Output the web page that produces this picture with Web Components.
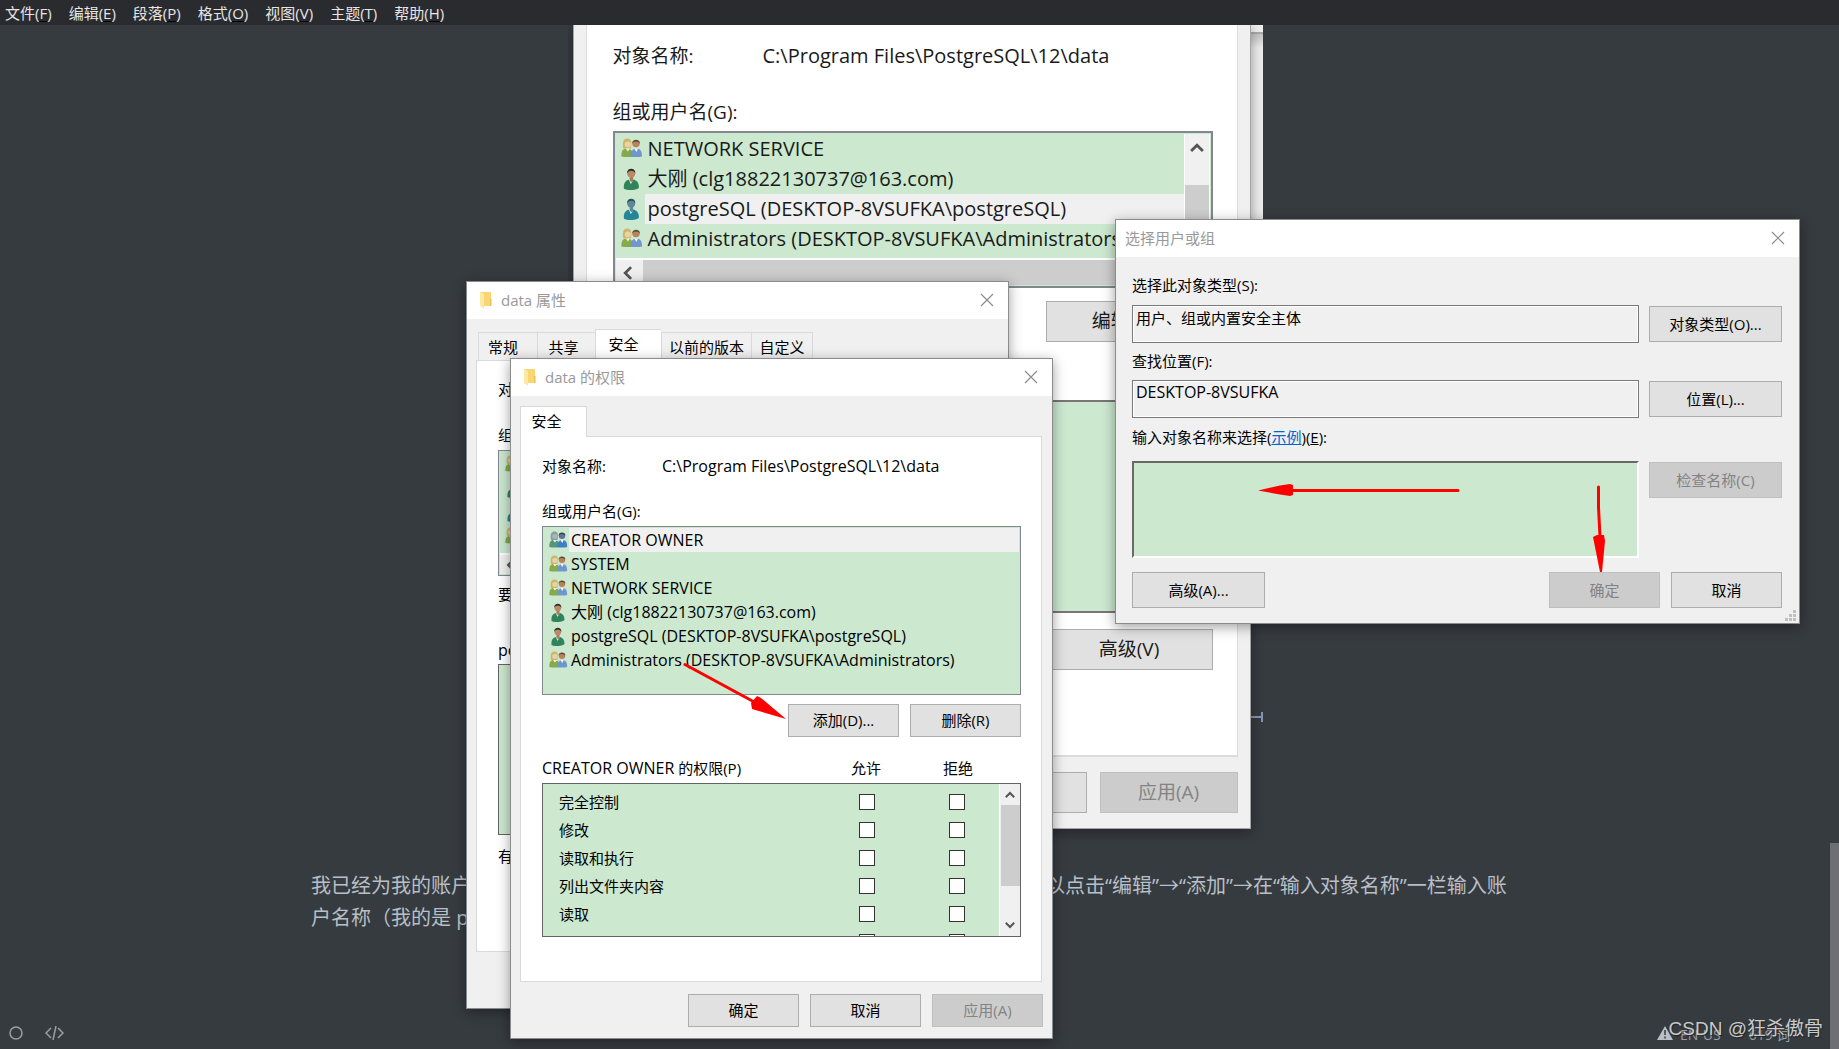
<!DOCTYPE html>
<html lang="zh-CN">
<head>
<meta charset="utf-8">
<title>Typora</title>
<style>
  html, body { height: 100%; margin: 0; }
  body {
    display: flex; flex-direction: column; overflow: hidden; position: relative;
    background: #363b40; color: #000;
    font: 15px/20px "Open Sans", "Noto Sans CJK SC", sans-serif;
  }
  doc-view { flex: 1; min-height: 0; }
  os-window { position: absolute; }
  #props { left: 466px; top: 281px; width: 541px; height: 726px; z-index: 2; }
  #perms { left: 510px; top: 358px; width: 541px; height: 679px; z-index: 3; }
  #picker { left: 1115px; top: 219px; width: 683px; height: 403px; z-index: 4; }
  status-bar { position: absolute; left: 0; right: 0; bottom: 0; z-index: 1; }
  ink-arrows { position: absolute; left: 0; top: 0; z-index: 5; }
</style>
</head>
<body>
<menu-bar></menu-bar>
<doc-view></doc-view>
<os-window id="props" caption="data 属性" icon="folder"><props-pane></props-pane></os-window>
<os-window id="perms" caption="data 的权限" icon="folder"><perms-pane></perms-pane></os-window>
<os-window id="picker" caption="选择用户或组"><picker-pane></picker-pane></os-window>
<ink-arrows></ink-arrows>
<status-bar></status-bar>

<script>
const base = `<style>
  *, *::before, *::after { box-sizing: border-box; }
  :host { display: block; }
  button, input { font: inherit; color: inherit; margin: 0; border-radius: 0; }
</style>`;

function element(name, render) {
  customElements.define(name, class extends HTMLElement {
    constructor() { super(); this.attachShadow({ mode: 'open' }); }
    connectedCallback() {
      if (!this.shadowRoot.firstChild) this.shadowRoot.innerHTML = base + render(this);
    }
  });
}

/* ---------- icons ---------- */
const head = (x, y, skin, hair) => `
  <circle cx="${x}" cy="${y}" r="3.4" fill="${skin}"/>
  <path d="M${x - 3.6} ${y}c-.4-5.4 7.6-5.4 7.2 0-1-2.2-2.4-2.2-3.8-2.4-1.4.2-2.6.6-3.4 2.4z" fill="${hair}"/>`;
element('user-icon', el => {
  const kind = el.getAttribute('kind'), sel = el.hasAttribute('selected');
  const pair = `<g transform="translate(.3 .4) scale(.94 .86)">
    <path d="M0 18c0-5 1-8 5-8s6 3 6 8c-3 .8-8 .8-11 0z" fill="${sel ? '#57957b' : '#86a94a'}"/>
    <path d="M1.800 10C.6 3 2.100 0 5.600 0s4.400 4 3 10z" fill="${sel ? '#8d9c9c' : '#cdb766'}"/>
    <circle cx="6" cy="6" r="2.900" fill="${sel ? '#a9b7bd' : '#ecd0a6'}"/>
    <path d="M4 10l2 3 2-3z" fill="#eef3e2"/>
    <path d="M8.500 18c-.2-5 2-8 5.500-8s5 3 5 8c-3 .9-7.500.9-10.500 0z" fill="${sel ? '#3c7fc4' : '#6f97cc'}"/>
    <path d="M12 10l1.800 3.500 1.500-3.500z" fill="#fff"/>
    ${head(13.5, 5.4, sel ? '#64748a' : '#b98355', sel ? '#23405f' : '#5b4a3f')}</g>`;
  const single = `
    <path d="M2.500 18c-.4-5 1-7.500 6-8.500 5 .5 7 3 7 7.500-3 2.600-10 2.600-13 1z" fill="${sel ? '#268596' : '#31835c'}"/>
    <path d="M6.500 9.500l2 4.500 2.500-4.500z" fill="#d9efe4"/>
    <path d="M7.500 7h3v4l-1.500 1-1.500-1z" fill="${sel ? '#5f8794' : '#a87a5c'}"/>
    ${head(8.8, 4.8, sel ? '#5f8794' : '#b98a68', sel ? '#24506c' : '#2d2926')}`;
  return `<style>:host{width:var(--icon,19px);height:var(--icon,19px);flex:none}svg{display:block;width:100%;height:100%}</style>
    <svg viewBox="0 0 19 19" aria-hidden="true">${kind === 'pair' ? pair : single}</svg>`;
});

element('scroll-arrow', el => {
  const turn = { up: 0, right: 90, down: 180, left: 270 }[el.getAttribute('dir')];
  return `<style>:host{width:var(--arrow,10px);height:var(--arrow,10px)}svg{display:block;width:100%;height:100%}</style>
    <svg viewBox="0 0 10 10" aria-hidden="true"><path transform="rotate(${turn} 5 5)" d="M.8 7.200L5 3l4.200 4.200" fill="none" stroke="#555" stroke-width="2"/></svg>`;
});

/* ---------- shared controls ---------- */
element('os-button', el => `<style>
    button { width: 100%; height: 100%; padding: 0 0 1px; border: 1px solid #adadad; background: #e1e1e1; }
    button:disabled { background: #ccc; border-color: #bfbfbf; color: #838383; }
  </style><button type="button" ${el.hasAttribute('off') ? 'disabled' : ''}><slot></slot></button>`);

element('os-window', el => `<style>
    :host { display: flex; flex-direction: column; background: #f0f0f0; border: 1px solid #8a8b8c;
      background-clip: padding-box; box-shadow: 0 3px 12px rgba(0,0,0,.38); box-sizing: content-box; }
    header { display: flex; align-items: center; height: 37px; padding: 0 14px 2px ${el.hasAttribute('icon') ? 12 : 9}px; background: #fff; flex: none; }
    h2 { flex: 1; margin: 0; font: inherit; color: #999; }
    button { border: 0; background: none; padding: 0; width: 14px; height: 14px; }
    svg { display: block; }
    .folder { margin-right: 9px; }
    main { flex: 1; min-height: 0; display: flex; flex-direction: column; }
    ::slotted(*) { flex: 1; min-height: 0; }
  </style>
  <header>
    ${el.hasAttribute('icon') ? `<svg class="folder" width="13" height="18" viewBox="0 0 13 18" aria-hidden="true">
      <path d="M1 1h11v14H1z" fill="#f7d673"/><path d="M1 1l4 2v15l-4-3z" fill="#fde9a4"/><path d="M11 8h1.500v7H11z" fill="#edbf52"/></svg>` : ''}
    <h2>${el.getAttribute('caption')}</h2>
    <button type="button" aria-label="关闭"><svg width="14" height="14" viewBox="0 0 14 14"><path d="M1 1l12 12M13 1L1 13" stroke="#8c8c8c" stroke-width="1.200"/></svg></button>
  </header>
  <main><slot></slot></main>`);

/* List of accounts. Entries: "kind|name", a leading * marks the selected one. */
element('user-list', el => {
  const rows = el.getAttribute('entries').split(';').map(s => {
    const sel = s[0] === '*', [kind, name] = s.replace('*', '').split('|');
    return `<li role="option" aria-selected="${sel}"><user-icon kind="${kind}" ${sel ? 'selected' : ''}></user-icon><span>${name || ''}</span></li>`;
  }).join('');
  const v = el.hasAttribute('vscroll'), h = el.hasAttribute('hscroll');
  return `<style>
    :host { display: flex; flex-direction: column; overflow: hidden; background: #cce8cf;
      border: var(--edge,1px) solid #828790; padding: 1px; height: var(--list-height); }
    .top { display: flex; flex: 1; min-height: 0; }
    ul { flex: 1; min-width: 0; margin: 0; padding: 0 0 0 5px; list-style: none; font-size: var(--list-size,16px); overflow: hidden; }
    li { display: flex; align-items: center; gap: var(--gap,1px); height: var(--row,24px); line-height: var(--row,24px); white-space: nowrap; }
    span { flex: 1; padding-left: var(--indent,2px); }
    li[aria-selected=true] span { background: #f0f0f0; }
    .v { width: 26px; background: #f0f0f0; border: solid #fff; border-width: 0 1px; display: flex; flex-direction: column; align-items: center; padding-top: 7px; }
    .v i { margin-top: 30px; width: 24px; flex: 1; background: #cdcdcd; }
    .h { height: var(--bar,21px); background: #f0f0f0; border-top: 2px solid #fff; display: flex; align-items: center; padding-left: 5px; flex: none; }
    .h i { margin-left: 8px; align-self: stretch; flex: 1; background: #cdcdcd; }
  </style>
  <div class="top"><ul role="listbox" aria-label="组或用户名">${rows}</ul>
  ${v ? '<div class="v"><scroll-arrow dir="up"></scroll-arrow><i></i></div>' : ''}</div>
  ${h ? '<div class="h"><scroll-arrow dir="left"></scroll-arrow><i></i></div>' : ''}`;
});

/* ---------- editor ---------- */
element('menu-bar', () => `<style>
    nav { display: flex; gap: 17px; height: 25px; padding: 0 5px; background: #2a2b2e; color: #e6e6e6; }
    button { border: 0; background: none; padding: 0; line-height: 26px; white-space: nowrap; }
    u { text-underline-offset: 2px; text-decoration-color: #000; }
  </style><nav>${['文件 F', '编辑 E', '段落 P', '格式 O', '视图 V', '主题 T', '帮助 H'].map(t => {
    const [n, k] = t.split(' '); return `<button type="button">${n}(<u>${k}</u>)</button>`; }).join('')}</nav>`);

element('doc-view', () => `<style>
    :host { display: flex; overflow: hidden; }
    article { flex: 1; padding: 0 311px; color: #b8bfc6; font-size: 20px; line-height: 32px; }
    security-shot { margin: 0 auto 25px; }
    p { margin: 0; white-space: nowrap; }
    .gap { display: inline-block; width: 574px; }
    .track { width: 9px; display: flex; flex-direction: column; justify-content: flex-end; }
    .track i { height: 206px; background: #6d6f75; }
  </style>
  <article><security-shot></security-shot>
    <p>我已经为我的账户<span class="gap"></span>以点击“编辑”→“添加”→在“输入对象名称”一栏输入账</p>
    <p>户名称（我的是 p</p>
  </article><div class="track"><i></i></div>`);

/* Enlarged view of the security tab embedded in the article. */
element('security-shot', () => `<style>
    :host { width: 695px; height: 820px; display: flex; padding-left: 5px; color: #1a1a1a; font-size: 19px; line-height: 28px; overflow: hidden; }
    .win { width: 678px; height: 804px; padding: 0 12px; background: #f0f0f0; border: solid #a5a5a5; border-width: 0 1px 1px; box-shadow: 0 3px 12px rgba(0,0,0,.38); display: flex; flex-direction: column; z-index: 1; }
    .page { flex: 1; background: #fff; border: solid #dcdcdc; border-width: 0 1px 2px; padding: 17px 24px 0 26px; }
    .name { display: grid; grid-template-columns: 150px 1fr; margin-bottom: 28px; }
    .path { font-size: 20px; }
    user-list { --edge: 2px; --list-height: 157px; --row: 30px; --list-size: 20px; --icon: 22px; --gap: 2px; --indent: 3px; --bar: 27px; --arrow: 14px; margin-top: 5px; }
    os-button { height: 41px; }
    .side { width: 167px; margin-left: auto; }
    .edit { margin-top: 13px; }
    .head { margin-top: 27px; padding-right: 58px; text-align: right; }
    .box { height: 213px; margin: 3px 0 16px; background: #cce8cf; border: 2px solid #777; }
    footer { display: flex; justify-content: flex-end; gap: 13px; padding: 15px 0; }
    footer os-button { width: 138px; }
    .behind { width: 12px; display: flex; flex-direction: column; }
    .behind b { height: 9px; background: #f0f0f0; border-bottom: 2px solid #aaa; }
    .behind i { height: 400px; background: linear-gradient(#c4c4c4, #eee 14px); }
    svg { margin-top: 275px; display: block; }
  </style>
  <div class="win"><div class="page">
    <div class="name"><span>对象名称:</span><span class="path">C:\\Program Files\\PostgreSQL\\12\\data</span></div>
    <div>组或用户名(G):</div>
    <user-list vscroll hscroll entries="pair|NETWORK SERVICE;single|大刚 (clg18822130737@163.com);*single|postgreSQL (DESKTOP-8VSUFKA\\postgreSQL);pair|Administrators (DESKTOP-8VSUFKA\\Administrators)"></user-list>
    <os-button class="side edit">编辑(E)...</os-button>
    <div class="head">拒绝</div>
    <div class="box"></div>
    <os-button class="side">高级(V)</os-button>
  </div><footer><os-button>取消</os-button><os-button off>应用(A)</os-button></footer></div>
  <div class="behind"><b></b><i></i><svg width="12" height="16" viewBox="0 0 12 16" aria-hidden="true"><path d="M0 8h11M11 3v10" stroke="#8595b5" stroke-width="2" fill="none"/></svg></div>`);

element('status-bar', () => `<style>
    :host { display: flex; align-items: center; height: 32px; padding: 0 16px 0 9px; color: #9a9fa4; }
    svg { display: block; }
    button { border: 0; background: none; padding: 0; margin-right: 22px; }
    .right { margin-left: auto; display: flex; align-items: center; position: relative; width: 166px; height: 32px; font-size: 14px; }
    .right span { margin: 4px 0 0 7px; } .right .words { margin-left: 28px; }
    .mark { position: absolute; right: 0; top: -1px; font: 19px/26px "Liberation Sans", "Noto Sans CJK SC", sans-serif; color: #c9cacb; text-shadow: 1px 1px 1px #222; white-space: nowrap; }
  </style>
  <button type="button" aria-label="大纲"><svg width="14" height="14" viewBox="0 0 14 14"><circle cx="7" cy="7" r="6" fill="none" stroke="#9a9fa4" stroke-width="1.500"/></svg></button>
  <button type="button" aria-label="源代码"><svg width="19" height="14" viewBox="0 0 19 14"><path d="M6 2L1 7l5 5M13 2l5 5-5 5M11 0L8 14" fill="none" stroke="#9a9fa4" stroke-width="1.500"/></svg></button>
  <div class="right"><svg width="16" height="14" viewBox="0 0 16 14" aria-hidden="true"><path d="M8 0l8 14H0z" fill="#b8bfc6"/><path d="M8 4v5M8 10.500v2" stroke="#363b40" stroke-width="1.500"/></svg>
    <span>EN-US</span><span class="words">619 词</span><div class="mark">CSDN @狂杀傲骨</div></div>`);

/* ---------- dialogs ---------- */
element('props-pane', () => `<style>
    :host { display: flex; flex-direction: column; padding: 10px 8px 56px 9px; }
    nav { display: flex; align-items: flex-end; padding-left: 2px; height: 31px; flex: none; }
    nav button { height: 28px; padding: 0; border: 1px solid #d9d9d9; border-width: 1px 0 0 1px; background: #f0f0f0; white-space: nowrap; }
    nav button:last-child { border-right-width: 1px; }
    nav .on { height: 31px; background: #fff; padding: 0 10px 2px 0; }
    nav .w1 { width: 59px; padding-right: 10px; } nav .w2 { width: 58px; padding-right: 6px; }
    .w3 { width: 66px; } .w4 { width: 90px; } .w5 { width: 62px; }
    section { flex: 1; min-height: 0; border: 1px solid #d9d9d9; background: #fff; padding: 18px 21px 0; overflow: hidden; }
    user-list { --list-height: 126px; margin: 5px 0 8px; }
    .line { height: 20px; }
    .l2 { margin-top: 26px; } .l3 { margin: 36px 0 4px; font-size: 16px; }
    .box { height: 171px; border: 1px solid #646464; background: #cce8cf; margin-bottom: 11px; }
  </style>
  <nav><button class="w1">常规</button><button class="w2">共享</button><button class="w3 on">安全</button><button class="w4">以前的版本</button><button class="w5">自定义</button></nav>
  <section><div class="line">对</div><div class="line l2">组</div>
    <user-list hscroll entries="pair;single;*single;pair"></user-list>
    <div class="line">要</div><div class="line l3">po</div><div class="box"></div><div class="line">有</div></section>`);

element('perms-pane', () => {
  const names = ['完全控制', '修改', '读取和执行', '列出文件夹内容', '读取', ''];
  const tick = (n, k) => `<td><input type="checkbox" aria-label="${n} ${k}"></td>`;
  return `<style>
    :host { display: flex; flex-direction: column; padding: 10px 10px 10px 9px; }
    nav { display: flex; height: 31px; flex: none; position: relative; z-index: 1; margin-bottom: -1px; }
    nav button { width: 67px; border: 1px solid #d9d9d9; border-bottom: 0; background: #fff; padding: 0 14px 3px 0; }
    section { height: 546px; border: 1px solid #d9d9d9; background: #fff; padding: 19px 20px 0 21px; }
    .name { display: grid; grid-template-columns: 120px 1fr; margin-bottom: 25px; }
    .path, .who b { font-size: 16px; font-weight: normal; }
    user-list { --list-height: 169px; margin: 5px 0 9px; }
    .buttons { display: flex; justify-content: flex-end; gap: 11px; }
    os-button { width: 111px; height: 33px; }
    .head { display: flex; margin-top: 21px; height: 20px; }
    .head .who { width: 278px; } .head .c { width: 92px; text-align: center; }
    .box { display: flex; height: 154px; margin-top: 5px; border: 1px solid #646464; background: #cce8cf; overflow: hidden; }
    table { flex: 1; border-collapse: collapse; margin-top: 4px; table-layout: fixed; align-self: flex-start; }
    tr { height: 28px; } th { font-weight: normal; text-align: left; padding: 0 0 0 16px; width: 279px; }
    td { padding: 0; text-align: center; width: 90px; }
    td:last-child { width: auto; padding-left: 3px; }
    td, th { height: 28px; }
    input { appearance: none; display: block; width: 16px; height: 16px; margin: 0 auto; border: 1px solid #333; background: #fff; }
    .v { width: 21px; border-left: 1px solid #fff; background: #f0f0f0; display: flex; flex-direction: column; align-items: center; padding: 6px 0; }
    .v i { width: 19px; height: 81px; margin: 5px 0 auto; background: #cdcdcd; }
    footer { display: flex; justify-content: flex-end; gap: 11px; margin: 12px -1px 0 0; }
  </style>
  <nav><button type="button">安全</button></nav>
  <section>
    <div class="name"><span>对象名称:</span><span class="path">C:\\Program Files\\PostgreSQL\\12\\data</span></div>
    <div>组或用户名(G):</div>
    <user-list entries="*pair|CREATOR OWNER;pair|SYSTEM;pair|NETWORK SERVICE;single|大刚 (clg18822130737@163.com);single|postgreSQL (DESKTOP-8VSUFKA\\postgreSQL);pair|Administrators (DESKTOP-8VSUFKA\\Administrators)"></user-list>
    <div class="buttons"><os-button>添加(D)...</os-button><os-button>删除(R)</os-button></div>
    <div class="head"><span class="who"><b>CREATOR OWNER</b> 的权限(P)</span><span class="c">允许</span><span class="c">拒绝</span></div>
    <div class="box"><table>${names.map(n => `<tr><th scope="row">${n}</th>${tick(n, '允许')}${tick(n, '拒绝')}</tr>`).join('')}</table>
      <div class="v"><scroll-arrow dir="up"></scroll-arrow><i></i><scroll-arrow dir="down"></scroll-arrow></div></div>
  </section>
  <footer><os-button>确定</os-button><os-button>取消</os-button><os-button off>应用(A)</os-button></footer>`;
});

element('picker-pane', () => `<style>
    :host { display: flex; flex-direction: column; padding: 18px 17px 0 16px; position: relative; }
    .row { display: grid; grid-template-columns: 1fr 133px; column-gap: 10px; row-gap: 10px; align-items: center; margin-bottom: 8px; }
    .row label { grid-column: 1 / 3; height: 20px; white-space: nowrap; }
    .row input { width: 100%; height: 38px; padding: 0 3px 14px; border: 1px solid #7a7a7a; box-shadow: inset 0 0 0 1px #fff; background: #f0f0f0; }
    .row.mid { row-gap: 9px; margin-bottom: 9px; }
    .row .host { font-size: 16px; }
    .row.last { align-items: start; row-gap: 14px; margin-bottom: 14px; }
    textarea { display: block; width: 100%; height: 97px; resize: none; padding: 2px; margin: 0; border: 2px solid; border-color: #696969 #fff #fff #696969; border-radius: 0; background: #cce8cf; }
    os-button { height: 36px; width: 133px; }
    .row.last os-button { margin-top: 1px; }
    a { color: #0066cc; }
    footer { display: flex; gap: 11px; }
    footer os-button + os-button { width: 111px; }
    footer .ok { margin-left: auto; }
    .grip { position: absolute; right: 3px; bottom: 2px; }
  </style>
  <div class="row"><label for="type">选择此对象类型(S):</label><input id="type" readonly value="用户、组或内置安全主体"><os-button>对象类型(O)...</os-button></div>
  <div class="row mid"><label for="place">查找位置(F):</label><input id="place" class="host" readonly value="DESKTOP-8VSUFKA"><os-button>位置(L)...</os-button></div>
  <div class="row last"><label for="names">输入对象名称来选择(<a href="#">示例</a>)(<u>E</u>):</label><textarea id="names"></textarea><os-button off>检查名称(C)</os-button></div>
  <footer><os-button>高级(A)...</os-button><os-button class="ok" off>确定</os-button><os-button>取消</os-button></footer>
  <svg class="grip" width="11" height="11" viewBox="0 0 11 11" aria-hidden="true"><path d="M8 0h3v3H8zM4 4h3v3H4zM8 4h3v3H8zM0 8h3v3H0zM4 8h3v3H4zM8 8h3v3H8z" fill="#bfbfbf"/></svg>`);

element('ink-arrows', () => `<style>:host{pointer-events:none}svg{display:block}</style>
  <svg width="1839" height="1049" viewBox="0 0 1839 1049" fill="#f00" stroke="#f00" aria-hidden="true">
    <path d="M1458 490.500H1290M1598.500 487v20l1.500 30M685 664.500l72 39" stroke-width="3" stroke-linecap="round" fill="none"/>
    <path stroke="none" d="M1258 490.500l22-5 10-1.500 3 1v10l-3 1-10-1.500zM1593 537l4-2h7l1 6-3 31h-2zM786 719l-34-10-1-6 6-7 4 2z"/>
  </svg>`);
</script>
</body>
</html>
